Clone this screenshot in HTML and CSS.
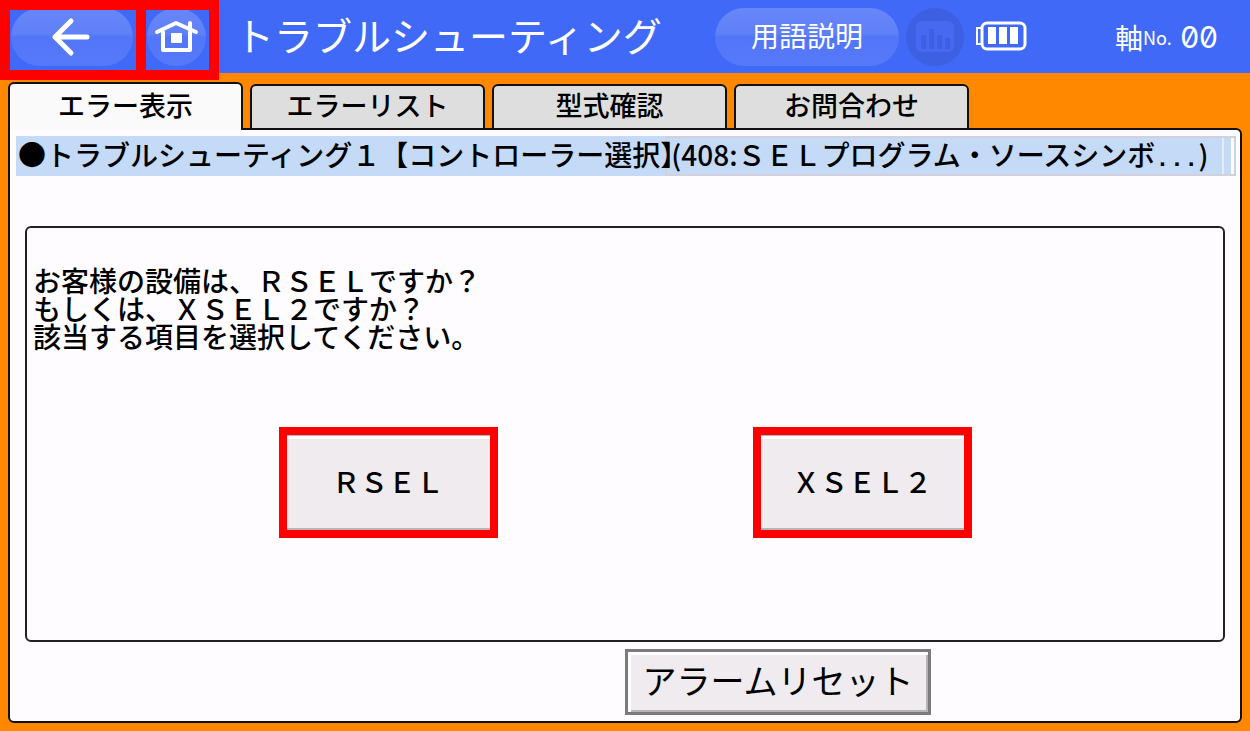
FILE: index.html
```html
<!DOCTYPE html>
<html lang="ja">
<head>
    <meta charset="UTF-8">
    <meta name="viewport" content="width=device-width, initial-scale=1.0">
    <title>トラブルシューティング</title>
    <link rel="stylesheet" href="styles.css">
</head>
<body>
    <header class="header">
        <div class="nav-frame nav-back">
            <button class="pill" type="button" aria-label="戻る">
                <svg width="42" height="42" viewBox="0 0 42 42" fill="none" stroke="#fff" stroke-width="5" stroke-linecap="round" stroke-linejoin="round">
                    <path d="M20 5L4 21L20 37M4 21H36"/>
                </svg>
            </button>
        </div>
        <div class="nav-frame nav-home">
            <button class="pill" type="button" aria-label="ホーム">
                <svg width="46" height="40" viewBox="0 0 46 40" fill="none" stroke="#fff" stroke-width="4" stroke-linecap="round" stroke-linejoin="round">
                    <path d="M3 15L22 6L42 15M36 6V12M9 15V33H36V15"/>
                    <rect x="17" y="16" width="11" height="10" rx="1" fill="#fff" stroke="none"/>
                </svg>
            </button>
        </div>
        <h1 class="title">トラブルシューティング</h1>
        <button class="pill glossary" type="button">用語説明</button>
        <button class="monitor" type="button" aria-label="モニタ" disabled>
            <svg width="58" height="58" viewBox="0 0 58 58">
                <rect x="10" y="13" width="38" height="31" rx="6" fill="#4769f1"/>
                <path d="M15 27h5v14h-5zM23 21h5v20h-5zM31 27h5v14h-5zM39 30h5v11h-5z" fill="#3d5fe2"/>
            </svg>
        </button>
        <svg class="battery" width="52" height="32" viewBox="0 0 52 32" fill="none" stroke="#fff" stroke-width="3">
            <rect x="7" y="3" width="43" height="26" rx="5"/>
            <path d="M7 8H2V24H7" stroke-width="2"/>
            <path d="M13 7h8v17h-8zM24 7h8v17h-8zM35 7h8v17h-8z" fill="#fff" stroke="none"/>
        </svg>
        <div class="axis">軸<span class="axis-label">No.</span><span class="axis-value">00</span></div>
    </header>

    <main class="main">
        <nav class="tabs">
            <button class="tab active" type="button">エラー表示</button>
            <button class="tab" type="button">エラーリスト</button>
            <button class="tab" type="button">型式確認</button>
            <button class="tab" type="button">お問合わせ</button>
        </nav>

        <div class="panel">
            <h2 class="heading">
                <span class="heading-name">●トラブルシューティング１【コントローラー選択】</span>
                <span class="heading-error">(408:ＳＥＬプログラム・ソースシンボ<span class="dots">...</span>)</span>
            </h2>

            <section class="question">
                <p>お客様の設備は、ＲＳＥＬですか？<br>もしくは、ＸＳＥＬ２ですか？<br>該当する項目を選択してください。</p>
                <div class="choices">
                    <button class="choice" type="button">ＲＳＥＬ</button>
                    <button class="choice" type="button">ＸＳＥＬ２</button>
                </div>
            </section>

            <button class="reset" type="button">アラームリセット</button>
        </div>
    </main>
</body>
</html>
```
FILE: styles.css
```css
* {
    margin: 0;
    padding: 0;
    box-sizing: border-box;
}

body {
    display: flex;
    flex-direction: column;
    min-height: 100vh;
    font-family: "Noto Sans CJK JP", sans-serif;
    font-size: 28px;
    line-height: 28px;
    color: #000;
    background: #ff8800;
}

button {
    padding-bottom: 4px;
    font: inherit;
    color: inherit;
    border: none;
    cursor: pointer;
}

svg {
    display: block;
}

/* Header */
.header {
    display: flex;
    align-items: flex-start;
    height: 73px;
    padding-right: 32px;
    color: white;
    background: #4169f8;
}

.nav-frame {
    flex-shrink: 0;
    height: 80px;
    border: 10px solid #ff0000;
    overflow: hidden;
}

.nav-back {
    width: 146px;
}

.nav-home {
    width: 83px;
    margin-left: -10px;
}

.nav-frame .pill {
    margin: -2px 0 0 1px;
    padding-bottom: 0;
}

.nav-back .pill {
    width: 122px;
}

.nav-home .pill {
    width: 59px;
}

.pill {
    display: flex;
    align-items: center;
    justify-content: center;
    height: 58px;
    border-radius: 29px;
    background: linear-gradient(#6786f8 0%, #6080f8 45%, #5276f8 50%, #5579f8 100%);
}

.title {
    margin-left: 16px;
    font-size: 39px;
    font-weight: 400;
    line-height: 68px;
    white-space: nowrap;
}

.glossary {
    width: 184px;
    margin: 8px 7px 0 auto;
}

.monitor {
    width: 58px;
    height: 58px;
    margin-top: 8px;
    padding: 0;
    border-radius: 50%;
    background: #3d5fe2;
}

.battery {
    margin: 20px 88px 0 11px;
}

.axis {
    display: flex;
    align-items: center;
    width: 103px;
    height: 73px;
    white-space: nowrap;
}

.axis-label {
    font-size: 18px;
}

.axis-value {
    margin-left: auto;
    font-family: Inter, sans-serif;
    font-size: 30px;
    font-feature-settings: "zero";
}

/* Tabs */
.main {
    flex: 1;
    display: flex;
    flex-direction: column;
    padding: 9px 8px 8px;
}

.tabs {
    display: flex;
    align-items: flex-end;
    gap: 7px;
    margin-bottom: -2px;
}

.tab {
    width: 235px;
    height: 46px;
    border: 2px solid #111;
    border-radius: 6px 6px 0 0;
    font-size: 27px;
    font-weight: 500;
    background: #dedede;
}

.tab.active {
    position: relative;
    height: 48px;
    border-bottom: none;
    background: #fafafa;
}

/* Panel */
.panel {
    flex: 1;
    display: flex;
    flex-direction: column;
    padding: 6px 4px;
    border: 2px solid #111;
    border-radius: 0 6px 6px 6px;
    background: #fffcff;
}

.heading {
    display: flex;
    height: 40px;
    margin-left: 2px;
    font-size: 28px;
    font-weight: 500;
    line-height: 36px;
    white-space: nowrap;
    background: linear-gradient(#c5daf7, #c5daf7) no-repeat 0 0 / calc(100% - 5px) 100%;
}

.heading-name {
    z-index: 1;
    padding-left: 2px;
}

.heading-error {
    flex: 1;
    margin-left: -23px;
    padding-left: 4px;
    border: 2px solid #cfd2d8;
    line-height: 32px;
    background: linear-gradient(#e4edfa, #e4edfa) no-repeat right 10px top / 2px 100%;
}

.dots {
    font-family: "Liberation Mono", monospace;
    font-size: 24px;
    font-weight: 700;
}

.question {
    flex: 1;
    margin: 50px 11px 0;
    padding: 38px 6px 0;
    border: 2px solid #222;
    border-radius: 6px;
    font-weight: 500;
}

.choices {
    display: flex;
    justify-content: center;
    gap: 255px;
    margin-top: 77px;
}

.choice {
    width: 219px;
    height: 111px;
    border: 8px solid #ff0000;
    font-weight: 500;
    background: #efebef;
    box-shadow: inset 0 1px #b5b5b5, inset 0 4px white, inset 0 -2px #b5b5b5;
}

.reset {
    align-self: flex-start;
    width: 306px;
    height: 66px;
    margin: 7px 0 0 50%;
    border: 3px solid #7b7b7b;
    font-size: 34px;
    background: #efebef;
    box-shadow: inset 3px 3px white, inset -2px -2px #b5b5b5;
}
```
